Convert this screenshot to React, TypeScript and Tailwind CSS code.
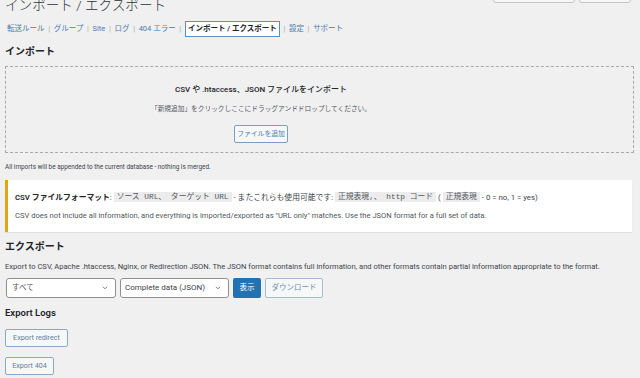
import React from "react";

const jp = { fontFamily: 'Roboto, "Noto Sans CJK JP", sans-serif' };
const mono = { fontFamily: '"Liberation Mono", "Noto Sans CJK JP", monospace' };

function Chevron() {
  return (
    <svg width="8" height="8" viewBox="0 0 20 20" className="shrink-0">
      <path d="M5 7l5 5 5-5" fill="none" stroke="#50575e" strokeWidth="2" />
    </svg>
  );
}

function Sep() {
  return <span className="text-[#a7aaad] mx-[3.7px]">|</span>;
}

export default function App() {
  const nav = ["転送ルール", "グループ", "Site", "ログ", "404 エラー"];
  return (
    <div
      className="w-[640px] h-[378px] overflow-hidden bg-[#f0f0f1] text-[#3c434a] pl-[5px] pr-[6px]"
      style={jp}
    >
      {/* header */}
      <div className="flex justify-between items-start h-[14px]">
        <div className="text-[13.6px] leading-[15px] font-light text-[#2c3338] -mt-[2px]">
          インポート / エクスポート
        </div>
        <div className="flex gap-[4px] mr-[3px] -mt-[17px]">
          <div className="w-[82px] h-[20px] border border-[#c3c4c7] rounded-[3px] bg-[#f6f7f7]" />
          <div className="w-[52px] h-[20px] border border-[#c3c4c7] rounded-[3px] bg-[#f6f7f7]" />
        </div>
      </div>

      {/* nav */}
      <div className="mt-[7px] h-[16px] flex items-center text-[7.5px] text-[#4a7db0] pl-[2px]">
        {nav.map((n) => (
          <React.Fragment key={n}>
            <span>{n}</span>
            <Sep />
          </React.Fragment>
        ))}
        <span className="h-[16px] px-[2px] flex items-center border border-[#5b8dc9] text-[#1d2327] font-bold bg-white">
          インポート / エクスポート
        </span>
        <Sep />
        <span>設定</span>
        <Sep />
        <span>サポート</span>
      </div>

      {/* import heading */}
      <div className="mt-[8px] text-[10px] leading-[13px] font-bold text-[#1d2327]">インポート</div>

      {/* drop zone */}
      <div className="mt-[8px] h-[87px] border border-dashed border-[#a7aaad]">
        <div className="w-[510px] flex flex-col items-center">
          <div className="mt-[16px] text-[8px] leading-[14px] font-medium text-[#1d2327]">
            CSV や .htaccess、JSON ファイルをインポート
          </div>
          <div className="mt-[7px] text-[6.7px] leading-[10px] text-[#50575e]">
            「新規追加」をクリックしここにドラッグアンドドロップしてください。
          </div>
          <div className="mt-[11px] w-[54px] h-[18px] flex items-center justify-center border border-[#7b9fc4] rounded-[2px] bg-[#f6f7f7] text-[6.8px] text-[#4a7db0]">
            ファイルを追加
          </div>
        </div>
      </div>

      <div className="mt-[9px] text-[6.4px] leading-[10px] text-[#3c434a]">
        All imports will be appended to the current database - nothing is merged.
      </div>

      {/* notice */}
      <div className="mt-[8px] mr-[2px] h-[52px] bg-white border-l-[3px] border-[#dba617] shadow-[0_1px_1px_rgba(0,0,0,0.06)] pl-[7px] flex flex-col justify-center gap-[8px]">
        <div className="flex items-center text-[7.8px] leading-[11px] text-[#3c434a] whitespace-nowrap">
          <span className="text-[#1d2327] font-semibold">CSV ファイルフォーマット</span>
          <span>:&nbsp;</span>
          <span className="bg-[#ececec] px-[3px] text-[#50575e] leading-[10px]" style={mono}>
            ソース URL、 ターゲット URL
          </span>
          <span>&nbsp;- またこれらも使用可能です:&nbsp;</span>
          <span className="bg-[#ececec] px-[3px] text-[#50575e] leading-[10px]" style={mono}>
            正規表現,、 http コード
          </span>
          <span>&nbsp;(&nbsp;</span>
          <span className="bg-[#ececec] px-[3px] text-[#50575e] leading-[10px]" style={mono}>
            正規表現
          </span>
          <span>&nbsp;- 0 = no, 1 = yes)</span>
        </div>
        <div className="text-[7.6px] leading-[10px] text-[#50575e] whitespace-nowrap">
          CSV does not include all information, and everything is imported/exported as "URL only" matches. Use the JSON format for a full set of data.
        </div>
      </div>

      {/* export */}
      <div className="mt-[8px] text-[10px] leading-[13px] font-bold text-[#1d2327]">エクスポート</div>
      <div className="mt-[9px] text-[7.6px] leading-[10px] text-[#3c434a] whitespace-nowrap">
        Export to CSV, Apache .htaccess, Nginx, or Redirection JSON. The JSON format contains full information, and other formats contain partial information appropriate to the format.
      </div>
      <div className="mt-[6px] flex items-center gap-[4px] pl-[1px]">
        <div className="w-[110px] h-[20px] border border-[#8c8f94] rounded-[3px] bg-white flex items-center justify-between pl-[5px] pr-[6px] text-[7.5px] text-[#50575e]">
          <span>すべて</span>
          <Chevron />
        </div>
        <div className="w-[109px] h-[20px] border border-[#8c8f94] rounded-[3px] bg-white flex items-center justify-between pl-[4px] pr-[6px] text-[8px] text-[#3c434a]">
          <span>Complete data (JSON)</span>
          <Chevron />
        </div>
        <div className="w-[28px] h-[20px] rounded-[2px] bg-[#2271b1] flex items-center justify-center text-[7.5px] text-white">
          表示
        </div>
        <div className="w-[58px] h-[20px] border border-[#a3bdd6] rounded-[2px] bg-[#f6f7f7] flex items-center justify-center text-[7.5px] text-[#6c8fb2]">
          ダウンロード
        </div>
      </div>

      <div className="mt-[9px] text-[9.5px] leading-[12px] font-semibold text-[#1d2327]">Export Logs</div>
      <div className="mt-[10px] w-[63px] h-[18px] border border-[#8aa9c8] rounded-[2px] bg-[#f6f7f7] flex items-center justify-center text-[7.2px] text-[#5f7f9f]">
        Export redirect
      </div>
      <div className="mt-[10px] w-[49px] h-[18px] border border-[#8aa9c8] rounded-[2px] bg-[#f6f7f7] flex items-center justify-center text-[7.2px] text-[#5f7f9f]">
        Export 404
      </div>
    </div>
  );
}
